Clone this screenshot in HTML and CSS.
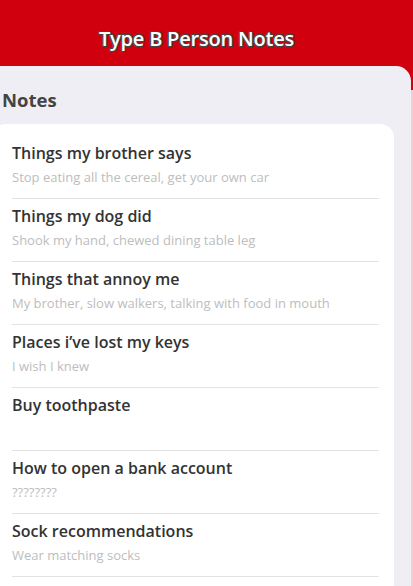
FILE: index.html
```html
<!DOCTYPE html>
<html lang="en">
<head>
    <meta charset="UTF-8">
    <meta name="viewport" content="width=device-width, initial-scale=1.0">
    <title>Type B Person Notes</title>
    <link rel="stylesheet" href="styles.css">
</head>
<body>
    <div class="page">
        <header class="app-bar">
            <h1>Type B Person Notes</h1>
        </header>

        <!-- Notes list -->
        <div class="sheet">
            <h2>Notes</h2>
            <div class="notes-card">
                <div class="note">
                    <div class="note-title">Things my brother says</div>
                    <div class="note-text">Stop eating all the cereal, get your own car</div>
                </div>
                <div class="note">
                    <div class="note-title">Things my dog did</div>
                    <div class="note-text">Shook my hand, chewed dining table leg</div>
                </div>
                <div class="note">
                    <div class="note-title">Things that annoy me</div>
                    <div class="note-text">My brother, slow walkers, talking with food in mouth</div>
                </div>
                <div class="note">
                    <div class="note-title">Places i’ve lost my keys</div>
                    <div class="note-text">I wish I knew</div>
                </div>
                <div class="note">
                    <div class="note-title">Buy toothpaste</div>
                    <div class="note-text"></div>
                </div>
                <div class="note">
                    <div class="note-title">How to open a bank account</div>
                    <div class="note-text">????????</div>
                </div>
                <div class="note">
                    <div class="note-title">Sock recommendations</div>
                    <div class="note-text">Wear matching socks</div>
                </div>
            </div>
        </div>
    </div>
</body>
</html>
```

FILE: styles.css
```css
html, body {
    margin: 0;
    padding: 0;
    height: 100%;
    overflow: hidden;
}
body {
    font-family: "Open Sans", "Noto Sans", sans-serif;
}
.page {
    min-height: 100%;
    background: linear-gradient(#d0000e 0, #d0000e 90px, #f4ccd2 90px);
}
.app-bar {
    height: 66px;
    display: flex;
    align-items: center;
    justify-content: center;
    padding: 10px 20px 0 0;
    box-sizing: border-box;
}
.app-bar h1 {
    margin: 0;
    font-size: 20px;
    font-weight: 600;
    color: white;
    letter-spacing: -0.2px;
    text-shadow: -1px -1px 0 #444, 1px -1px 0 #444, -1px 1px 0 #444, 1px 1px 0 #444;
}
.sheet {
    margin-right: 2px;
    min-height: 600px;
    background: #efeef4;
    border-top-right-radius: 15px;
    padding-top: 22px;
}
.sheet h2 {
    margin: 0 0 12px 2px;
    font-size: 18.5px;
    line-height: 24px;
    font-weight: 700;
    color: #444;
}
.notes-card {
    margin: 0 17px 0 -8px;
    padding-top: 12px;
    padding-bottom: 20px;
    background: white;
    border-radius: 14px;
}
.note {
    height: 56px;
    margin: 0 15px 0 20px;
    padding-top: 6px;
    border-bottom: 1px solid #e2e2e2;
}
.note-title {
    font-size: 16px;
    line-height: 22px;
    font-weight: 600;
    color: #333;
}
.note-text {
    margin-top: 5px;
    font-size: 13px;
    line-height: 16px;
    color: #bdbdbd;
}
```
